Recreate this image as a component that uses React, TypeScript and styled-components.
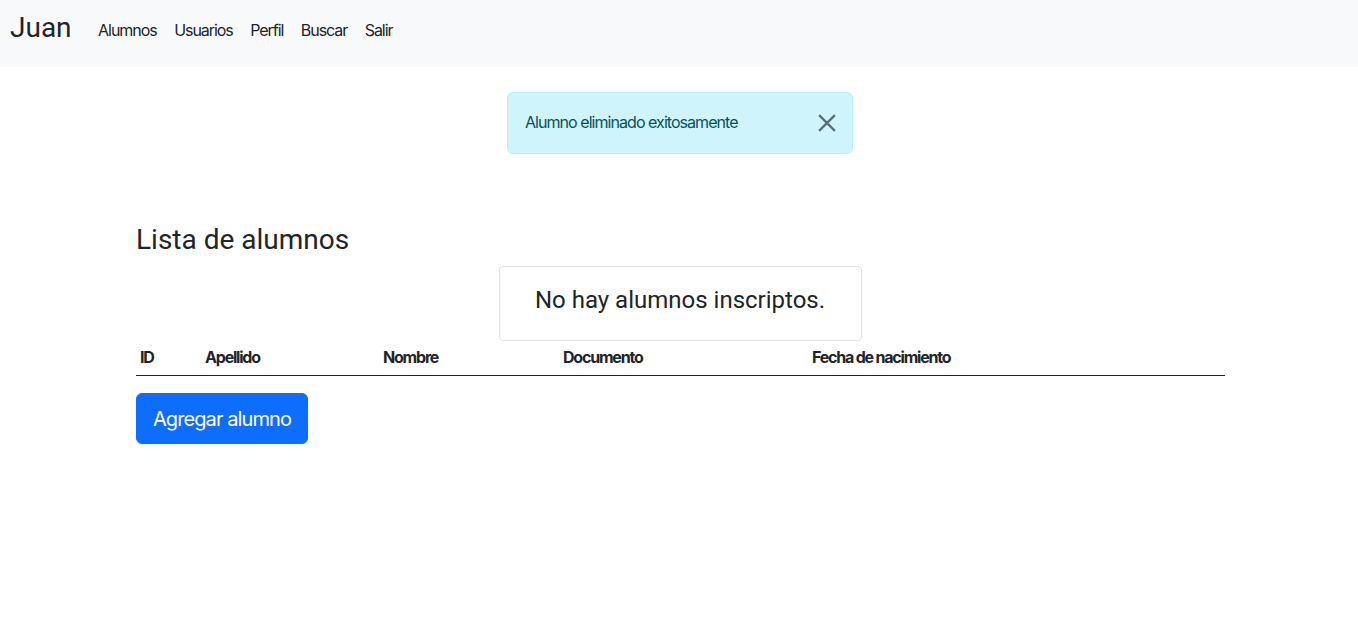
import React from "react";
import styled, { createGlobalStyle } from "styled-components";

const Global = createGlobalStyle`
  * { box-sizing: border-box; }
  body {
    margin: 0;
    font-family: Inter, "Liberation Sans", sans-serif;
    font-size: 16px;
    line-height: 1.5;
    color: #212529;
    background: #fff;
  }
`;

const NavBar = styled.nav`
  height: 67px;
  background: #f8f9fa;
  display: flex;
  align-items: center;
  padding: 0 10px;
`;

const Brand = styled.a`
  font-family: Roboto, "Liberation Sans", sans-serif;
  font-size: 28px;
  line-height: 1.2;
  color: #212529;
  text-decoration: none;
  margin-right: 18px;
  margin-top: -12px;
`;

const NavLinks = styled.div`
  display: flex;
  gap: 0;
  margin-top: -8px;
`;

const NavLink = styled.a`
  font-size: 16px;
  letter-spacing: -1.05px;
  color: #212529;
  text-decoration: none;
  padding: 8px 9px 8px 8.5px;
`;

const Main = styled.main`
  padding: 25px 133px 0 136px;
  display: flex;
  flex-direction: column;
`;

const Alert = styled.div`
  align-self: center;
  width: 346px;
  margin-left: -1px;
  background: #cff4fc;
  border: 1px solid #b6effb;
  border-radius: 6px;
  color: #055160;
  padding: 17px 16px 19px 17px;
  display: flex;
  align-items: center;
  justify-content: space-between;
  font-size: 16px;
  letter-spacing: -0.95px;
`;

const CloseButton = styled.button`
  border: 0;
  background: transparent;
  padding: 0;
  width: 20px;
  height: 20px;
  display: flex;
  align-items: center;
  justify-content: center;
  cursor: pointer;
  margin-right: -1px;
  margin-top: 2px;
  opacity: 0.55;
`;

const Heading = styled.h3`
  font-family: Roboto, "Liberation Sans", sans-serif;
  font-weight: 400;
  font-size: 28px;
  line-height: 1.2;
  margin: 69px 0 9px;
`;

const EmptyBox = styled.div`
  align-self: center;
  width: 363px;
  height: 75px;
  margin-left: -1px;
  border: 1px solid #dee2e6;
  border-radius: 4px;
  display: flex;
  align-items: center;
  justify-content: center;
  padding-bottom: 6px;
  font-family: Roboto, "Liberation Sans", sans-serif;
  font-size: 24px;
`;

const Table = styled.table`
  width: 100%;
  border-collapse: collapse;
  margin: 2px 0 17px;
`;

const Th = styled.th<{ $w: number }>`
  width: ${(p) => p.$w}px;
  text-align: left;
  font-weight: 700;
  font-size: 16px;
  letter-spacing: -1.2px;
  padding: 2px 4px 6px;
  border-bottom: 1px solid #212529;
`;

const Button = styled.button`
  align-self: flex-start;
  background: #0d6efd;
  color: #fff;
  border: 1px solid #0d6efd;
  border-radius: 6px;
  font-family: Inter, "Liberation Sans", sans-serif;
  font-size: 20px;
  letter-spacing: -0.9px;
  line-height: 1.5;
  white-space: nowrap;
  padding: 2px 0 0;
  width: 172px;
  height: 51px;
`;

const cols: [string, number][] = [
  ["ID", 65],
  ["Apellido", 178],
  ["Nombre", 180],
  ["Documento", 249],
  ["Fecha de nacimiento", 417],
];

export default function App() {
  return (
    <>
      <Global />
      <NavBar>
        <Brand href="#">Juan</Brand>
        <NavLinks>
          {["Alumnos", "Usuarios", "Perfil", "Buscar", "Salir"].map((l) => (
            <NavLink key={l} href="#">
              {l}
            </NavLink>
          ))}
        </NavLinks>
      </NavBar>
      <Main>
        <Alert>
          <span>Alumno eliminado exitosamente</span>
          <CloseButton aria-label="Close">
            <svg width="18" height="18" viewBox="0 0 16 16">
              <path d="M1 1L15 15M15 1L1 15" stroke="#000" strokeWidth="2" />
            </svg>
          </CloseButton>
        </Alert>
        <Heading>Lista de alumnos</Heading>
        <EmptyBox>No hay alumnos inscriptos.</EmptyBox>
        <Table>
          <thead>
            <tr>
              {cols.map(([c, w]) => (
                <Th key={c} $w={w}>
                  {c}
                </Th>
              ))}
            </tr>
          </thead>
        </Table>
        <Button>Agregar alumno</Button>
      </Main>
    </>
  );
}
